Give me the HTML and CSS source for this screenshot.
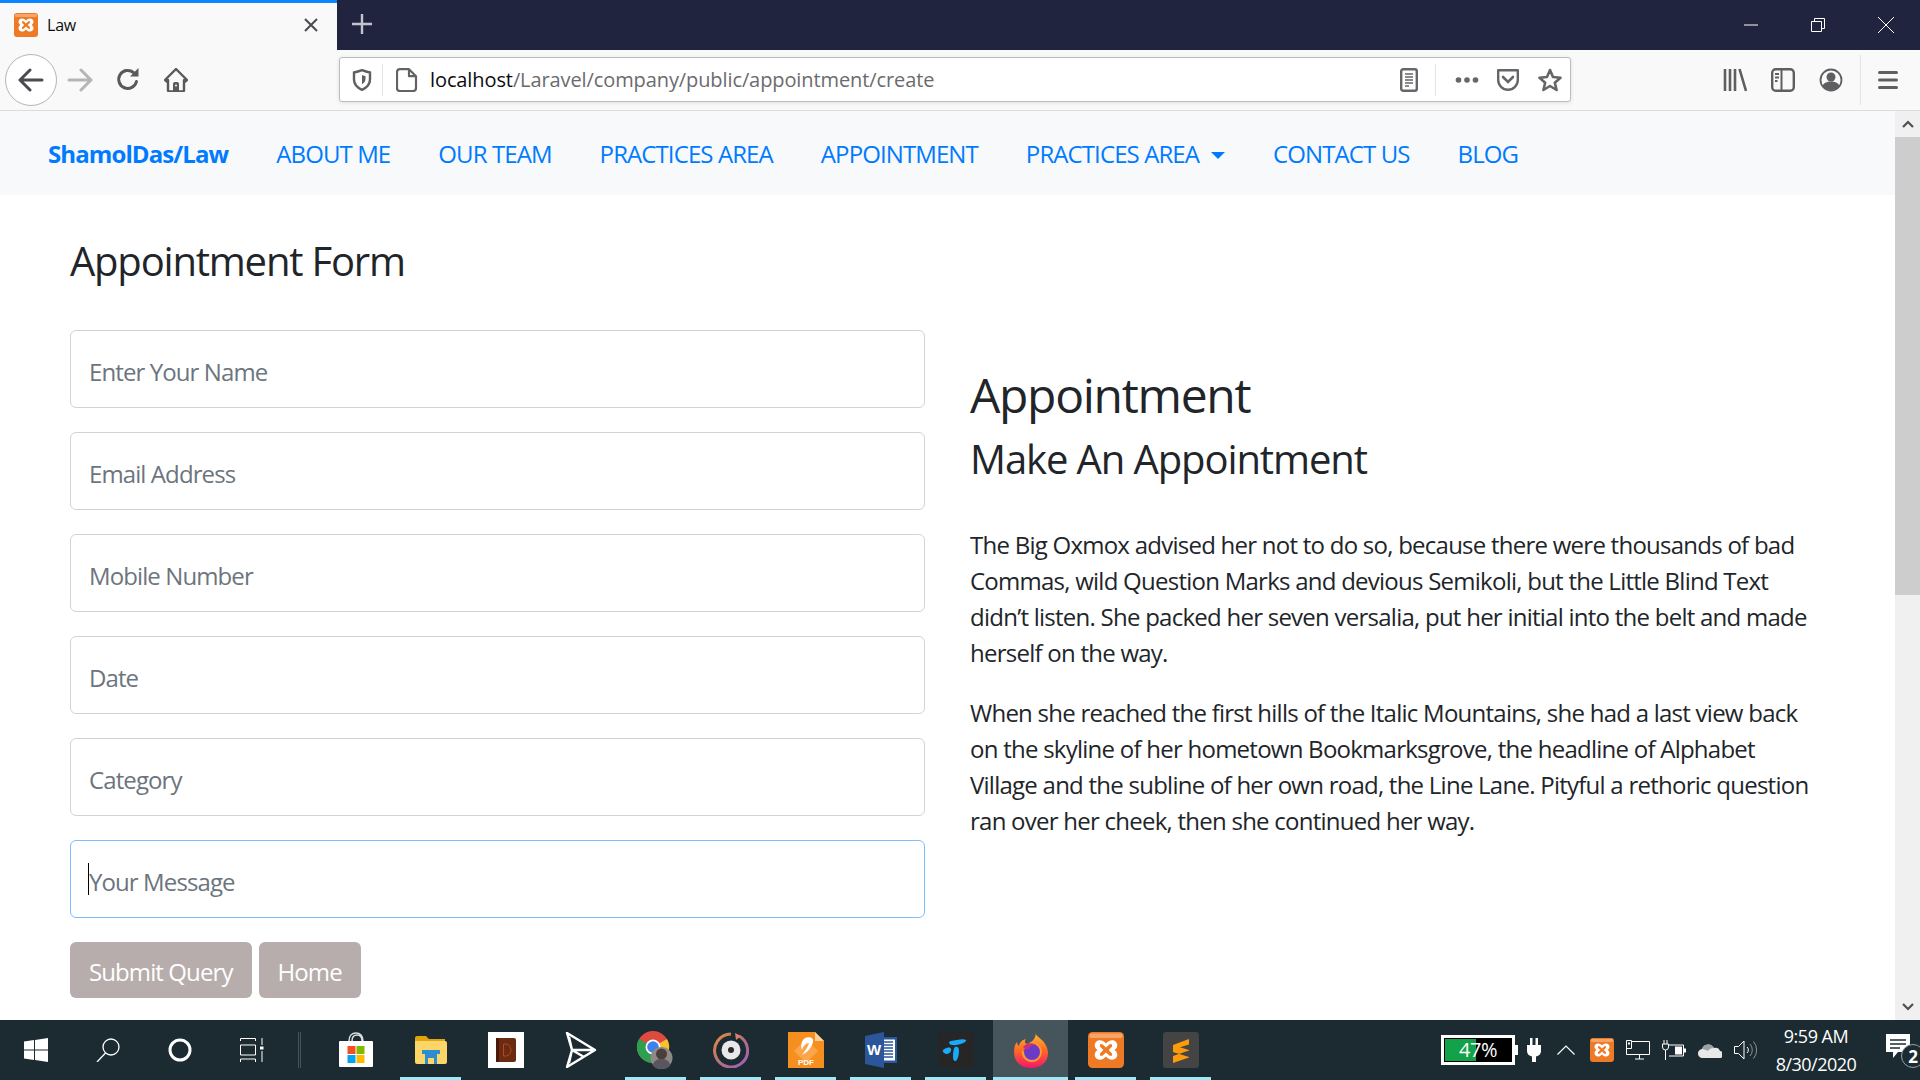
FILE: index.html
```html
<!DOCTYPE html>
<html lang="en">
<head>
<meta charset="utf-8">
<title>Law</title>
<link rel="stylesheet" href="styles.css">
</head>
<body>
<svg class="defs" width="0" height="0">
  <symbol id="xampp" viewBox="0 0 24 24">
    <rect x="0" y="0" width="24" height="24" rx="3" fill="#ef7a25"/>
    <rect x="1" y="1" width="22" height="3" rx="1" fill="#f7a468"/>
    <path d="M8 5.5c-2 0-3.5 1.4-3.5 3.3 0 1.3.7 2.400 1.800 3.200-1.100.8-1.800 1.900-1.800 3.200 0 1.900 1.500 3.300 3.500 3.300 1.600 0 3-.9 4-2.100 1 1.200 2.400 2.100 4 2.100 2 0 3.500-1.400 3.500-3.300 0-1.300-.7-2.400-1.800-3.200 1.100-.8 1.800-1.900 1.800-3.200 0-1.900-1.500-3.300-3.500-3.300-1.600 0-3 .9-4 2.100-1-1.200-2.400-2.100-4-2.100z" fill="#fff"/>
    <path d="M8 8.200h1.600L12 10.400l2.400-2.200H16v1.500l-2.200 2.300 2.200 2.300v1.500h-1.600L12 13.600l-2.400 2.200H8v-1.500l2.200-2.300L8 9.700z" fill="#ef7a25"/>
  </symbol>
</svg>
<div class="window">
  <header class="tabbar">
    <div class="tab">
      <svg class="favicon" width="24" height="24"><use href="#xampp"/></svg>
      <span class="tab-title">Law</span>
      <svg class="tab-close" width="16" height="16" viewBox="0 0 16 16"><path d="M2 2l12 12M14 2L2 14" stroke="#4a4a4f" stroke-width="2"/></svg>
    </div>
    <svg class="newtab" width="22" height="22" viewBox="0 0 22 22"><path d="M11 1v20M1 11h20" stroke="#c3c4ce" stroke-width="2.400"/></svg>
    <div class="winctl">
      <svg width="14" height="14" viewBox="0 0 14 14"><path d="M0 7h14" stroke="#fff"/></svg>
      <svg width="14" height="14" viewBox="0 0 14 14"><path d="M.5 3.500h10v10H.5zM3.500 3.500V.5h10v10h-3" fill="none" stroke="#fff"/></svg>
      <svg width="16" height="16" viewBox="0 0 16 16"><path d="M0 0l16 16M16 0L0 16" stroke="#fff"/></svg>
    </div>
  </header>

  <div class="toolbar">
    <div class="backbtn">
      <svg width="26" height="24" viewBox="0 0 26 24"><path d="M2 12h22M12 2L2 12l10 10" fill="none" stroke="#4a4a4f" stroke-width="3" stroke-linecap="round" stroke-linejoin="round"/></svg>
    </div>
    <div class="tbtn">
      <svg width="26" height="24" viewBox="0 0 26 24"><path d="M2 12h22M14 2l10 10-10 10" fill="none" stroke="#b5b5b6" stroke-width="3" stroke-linecap="round" stroke-linejoin="round"/></svg>
    </div>
    <div class="tbtn">
      <svg width="24" height="24" viewBox="0 0 24 24"><path d="M20.500 13.500A9 9 0 1 1 17.500 4.500" fill="none" stroke="#59595c" stroke-width="3" stroke-linecap="round"/><path d="M14 8.500h8.500V0z" fill="#59595c"/></svg>
    </div>
    <div class="tbtn">
      <svg width="24" height="24" viewBox="0 0 24 24"><path d="M1 12L12 1l11 11-1.500 1.500L20 12v10a1.500 1.500 0 0 1-1.500 1.500h-13A1.500 1.500 0 0 1 4 22V12l-1.500 1.500z" fill="none" stroke="#59595c" stroke-width="2.400" stroke-linejoin="round"/><path d="M9 23v-7a2 2 0 0 1 2-2h2a2 2 0 0 1 2 2v7z" fill="#59595c"/><circle cx="12" cy="17.500" r="1" fill="#f9f9fa"/></svg>
    </div>
    <div class="urlbar">
      <svg class="u-shield" width="20" height="22" viewBox="0 0 20 22"><path d="M2 3.500C5 3 7.500 2.200 10 1.200c2.500 1 5 1.800 8 2.300v7c0 5-4 8.500-8 10.300-4-1.800-8-5.300-8-10.300z" fill="none" stroke="#5f5f62" stroke-width="2.400"/><path d="M10 6c1.300.6 2.400.8 3.500 1v3c0 2.500-1.800 4.300-3.500 5.200z" fill="#5f5f62"/></svg>
      <span class="u-sep"></span>
      <svg class="u-page" width="22" height="24" viewBox="0 0 22 24"><path d="M4 1.200h9l7 7V20a3 3 0 0 1-3 3H4a3 3 0 0 1-3-3V4a3 3 0 0 1 3-2.800zM13 1.200V8.200h7" fill="none" stroke="#636366" stroke-width="2.200" stroke-linejoin="round"/></svg>
      <span class="u-text"><span class="u-host">localhost</span>/Laravel/company/public/appointment/create</span>
      <svg class="u-reader" width="18" height="24" viewBox="0 0 18 24"><rect x="1.200" y="1.200" width="15.600" height="21.600" rx="2" fill="none" stroke="#66666a" stroke-width="2.400"/><path d="M5 6h8M5 9h8M5 12h8M5 15h8M5 18h4" stroke="#66666a" stroke-width="1.500"/></svg>
      <span class="u-sep2"></span>
      <svg class="u-dots" width="24" height="8" viewBox="0 0 24 8"><circle cx="3.500" cy="4" r="2.800" fill="#66666a"/><circle cx="12" cy="4" r="2.800" fill="#66666a"/><circle cx="20.500" cy="4" r="2.800" fill="#66666a"/></svg>
      <svg class="u-pocket" width="24" height="24" viewBox="0 0 24 24"><path d="M2.200 2.200h19.600v9.800a9.800 9.800 0 0 1-19.600 0z" fill="none" stroke="#66666a" stroke-width="2.400" stroke-linejoin="round"/><path d="M7 9l5 5 5-5" fill="none" stroke="#66666a" stroke-width="2.600" stroke-linecap="round"/></svg>
      <svg class="u-star" width="24" height="24" viewBox="0 0 24 24"><path d="M12 2l3 7 7.500.7-5.700 5 1.800 7.300L12 18l-6.600 4 1.800-7.300-5.700-5L9 9z" fill="none" stroke="#66666a" stroke-width="2.600" stroke-linejoin="round"/></svg>
    </div>
    <div class="tools">
      <svg width="24" height="24" viewBox="0 0 24 24"><path d="M2 1v22M7 1v22M12 1v22M16.500 1L23 23" stroke="#5f5f62" stroke-width="2.600"/></svg>
      <svg width="24" height="24" viewBox="0 0 24 24"><rect x="1.200" y="1.200" width="21.600" height="21.600" rx="3.500" fill="none" stroke="#5f5f62" stroke-width="2.400"/><path d="M10.500 2v20" stroke="#5f5f62" stroke-width="2"/><path d="M4 6h4M4 9.500h4M4 13h2.500" stroke="#5f5f62" stroke-width="1.800"/></svg>
      <svg width="24" height="24" viewBox="0 0 24 24"><circle cx="12" cy="12" r="10.500" fill="none" stroke="#5f5f62" stroke-width="1.800"/><circle cx="12" cy="9" r="4.500" fill="#5f5f62"/><path d="M3.500 18c1.500-3.500 5-4.500 8.500-4.500s7 1 8.500 4.500c-2 2.500-5 4-8.500 4s-6.500-1.500-8.500-4z" fill="#5f5f62"/></svg>
      <span class="tools-sep"></span>
      <svg width="20" height="20" viewBox="0 0 20 20"><path d="M1.500 2.500h17M1.500 10h17M1.500 17.500h17" stroke="#5f5f62" stroke-width="3" stroke-linecap="round"/></svg>
    </div>
  </div>

  <div class="viewport">
    <main class="page">
      <nav class="navbar">
        <a class="brand" href="#">ShamolDas/Law</a>
        <a href="#">ABOUT ME</a>
        <a href="#">OUR TEAM</a>
        <a href="#">PRACTICES AREA</a>
        <a href="#">APPOINTMENT</a>
        <a href="#" class="dropdown">PRACTICES AREA<i class="caret"></i></a>
        <a href="#">CONTACT US</a>
        <a href="#">BLOG</a>
      </nav>
      <div class="content">
        <section class="form-col">
          <h2 class="form-title">Appointment Form</h2>
          <form class="form">
            <input class="field" type="text" placeholder="Enter Your Name">
            <input class="field" type="text" placeholder="Email Address">
            <input class="field" type="text" placeholder="Mobile Number">
            <input class="field" type="text" placeholder="Date">
            <input class="field" type="text" placeholder="Category">
            <div class="field-wrap">
              <input class="field focused" type="text" placeholder="Your Message">
              <span class="caret-line"></span>
            </div>
            <div class="actions">
              <button class="btn" type="button">Submit Query</button>
              <button class="btn" type="button">Home</button>
            </div>
          </form>
        </section>
        <section class="text-col">
          <h1 class="h-main">Appointment</h1>
          <h2 class="h-sub">Make An Appointment</h2>
          <p>The Big Oxmox advised her not to do so, because there were thousands of bad Commas, wild Question Marks and devious Semikoli, but the Little Blind Text didn’t listen. She packed her seven versalia, put her initial into the belt and made herself on the way.</p>
          <p>When she reached the first hills of the Italic Mountains, she had a last view back on the skyline of her hometown Bookmarksgrove, the headline of Alphabet Village and the subline of her own road, the Line Lane. Pityful a rethoric question ran over her cheek, then she continued her way.</p>
        </section>
      </div>
    </main>
    <aside class="scrollbar">
      <svg class="sb-arrow" width="12" height="8" viewBox="0 0 12 8"><path d="M1 7l5-5 5 5" fill="none" stroke="#505050" stroke-width="2.200"/></svg>
      <div class="sb-track"><div class="sb-thumb"></div></div>
      <svg class="sb-arrow" width="12" height="8" viewBox="0 0 12 8"><path d="M1 1l5 5 5-5" fill="none" stroke="#505050" stroke-width="2.200"/></svg>
    </aside>
  </div>

  <footer class="taskbar">
    <div class="sys">
      <div class="sys-slot"><svg width="24" height="24" viewBox="0 0 24 24"><path d="M0 3.400l10-1.400v9.500H0zM11 1.900L24 0v11.500H11zM0 12.500h10V22L0 20.600zM11 12.500h13V24l-13-1.900z" fill="#fff"/></svg></div>
      <div class="sys-slot"><svg width="24" height="24" viewBox="0 0 24 24"><circle cx="15" cy="9" r="8" fill="none" stroke="#fff" stroke-width="1.300"/><path d="M9.500 15L1 24" stroke="#fff" stroke-width="1.300"/></svg></div>
      <div class="sys-slot"><svg width="24" height="24" viewBox="0 0 24 24"><circle cx="12" cy="12" r="10" fill="none" stroke="#fff" stroke-width="3"/></svg></div>
      <div class="sys-slot"><svg width="24" height="24" viewBox="0 0 24 24"><path d="M.5 3V.5h15V3M.5 7h15v10H.5zM.5 24v-3h15v3M22 0v7M22 13v11" fill="none" stroke="#fff" stroke-width="1"/><rect x="20" y="8.500" width="3.500" height="3" fill="#fff"/></svg></div>
    </div>
    <span class="tb-sep"></span>
    <div class="apps">
      <div class="app">
        <svg width="36" height="36" viewBox="0 0 36 36"><path d="M11 9c0-5 3-8 7-8s7 3 7 8M14 9c0-4 2-6 5-6s5 2 5 6" fill="none" stroke="#ddd" stroke-width="1.500"/><rect x="1" y="9" width="34" height="26" rx="1" fill="#fff"/><rect x="9.500" y="14" width="8" height="8" fill="#f25022"/><rect x="18.500" y="14" width="8" height="8" fill="#7fba00"/><rect x="9.500" y="23" width="8" height="8" fill="#00a4ef"/><rect x="18.500" y="23" width="8" height="8" fill="#ffb900"/></svg>
      </div>
      <div class="app open">
        <svg width="34" height="30" viewBox="0 0 34 30"><path d="M1 3a2 2 0 0 1 2-2h9l3 3h16v4H1z" fill="#e0a40f"/><path d="M1 6h30a2 2 0 0 1 2 2v19a2 2 0 0 1-2 2H3a2 2 0 0 1-2-2z" fill="#fcd669"/><path d="M11 29V19h-3v-4h18v4h-3v10h-4v-6h-4v6z" fill="#2e8dd0" /><path d="M14 29v-6h6v6z" fill="#fcd669"/></svg>
      </div>
      <div class="app">
        <div class="book-bg"><svg width="20" height="24" viewBox="0 0 20 24"><rect x="0" y="0" width="20" height="24" rx="2" fill="#6b2a12"/><rect x="0" y="0" width="3" height="24" fill="#4a1a08"/><path d="M7.500 6h2.500a5 6 0 0 1 0 12H7.500z" fill="none" stroke="#b24a1a" stroke-width="1"/></svg></div>
      </div>
      <div class="app">
        <svg width="32" height="36" viewBox="0 0 32 36"><path d="M2 1l28 17L2 35l5-17z M7 18h23M7 18l12 7M7 18L4 5M7 18L4 31" fill="none" stroke="#fff" stroke-width="2.400" stroke-linejoin="round"/></svg>
      </div>
      <div class="app open">
        <svg width="40" height="40" viewBox="0 0 40 40">
          <circle cx="17" cy="17" r="16" fill="#dd4b3e"/>
          <path d="M17 17L31 9A16 16 0 0 1 23 32z" fill="#fbc02d"/>
          <path d="M17 17L3 9a16 16 0 0 0 13 24z" fill="#2f9e4f"/>
          <circle cx="17" cy="17" r="7.500" fill="#fff"/><circle cx="17" cy="17" r="5.800" fill="#3f80ea"/>
          <circle cx="25.500" cy="28" r="11" fill="#8d8a88"/><circle cx="25.500" cy="24" r="5.500" fill="#4a3f3a"/><path d="M16.500 35c2-5 5-6 9-6s7 1 9 6c-2 3-5 4-9 4s-7-1-9-4z" fill="#5a5660"/>
        </svg>
      </div>
      <div class="app open">
        <svg width="36" height="36" viewBox="0 0 36 36"><defs><linearGradient id="disc" x1="0" y1="0" x2="1" y2="1"><stop offset="0" stop-color="#e78a3b"/><stop offset=".5" stop-color="#b5707a"/><stop offset="1" stop-color="#9b5fc0"/></linearGradient></defs><path d="M26 4a16.500 16.500 0 1 1-8-2" fill="none" stroke="url(#disc)" stroke-width="3"/><path d="M22 1l6 3-5 4z" fill="#d9826a"/><circle cx="18" cy="18" r="9.500" fill="#e9e9e9"/><circle cx="18" cy="18" r="3" fill="#2a2a2a"/></svg>
      </div>
      <div class="app open">
        <svg width="36" height="36" viewBox="0 0 36 36"><path d="M0 0h27l9 9v27H0z" fill="#f78f1f"/><path d="M27 0v9h9z" fill="#fbd09a"/><path d="M18 7l12 12-12 12L6 19z" fill="#fba64a"/><path d="M17 6c5-2 9 0 8 4-1 5-5 10-11 13 3-4 6-8 7-12-3 0-6 3-7 7-2-5 0-10 3-12z" fill="#fff"/><text x="18" y="33" class="pdf-t">PDF</text></svg>
      </div>
      <div class="app open">
        <svg width="32" height="36" viewBox="0 0 32 36"><rect x="12" y="5" width="20" height="26" fill="#2b579a"/><rect x="17" y="7.500" width="13" height="21" fill="#fff"/><path d="M19 10h9M19 13h9M19 16h9M19 19h9M19 22h9M19 25h9" stroke="#2b579a" stroke-width="1.300"/><path d="M0 4l19-4v36L0 32z" fill="#2b579a"/><text x="9" y="23" class="word-t">W</text></svg>
      </div>
      <div class="app open">
        <svg width="36" height="36" viewBox="0 0 36 36"><rect width="36" height="36" rx="3" fill="#262626"/><path d="M13 9c5-.5 12-3 15-1 1.500 2-8 6-14 5-3-.5-4-3.500-1-4zM5 18c3-2.500 7-3.500 8-1 1 2-2 5-4 5s-5-2-4-4zM17 15c3-1 4 1 4 4s-1 8-3 10c-2 .5-3-1-3-4s.5-9 2-10z" fill="#19aaf8"/></svg>
      </div>
      <div class="app active">
        <svg width="34" height="36" viewBox="0 0 34 36"><defs><linearGradient id="ff" x1="0" y1="0" x2="0" y2="1"><stop offset="0" stop-color="#ffbd30"/><stop offset=".5" stop-color="#ff6b24"/><stop offset="1" stop-color="#f5156c"/></linearGradient></defs><path d="M21 0c1 4 4 5 8 9 4 5 5 9 5 12 0 9-7 15-17 15S0 30 0 20c0-4 1-8 3-10 0 2 1 3 2 4 1-4 3-6 7-7-2 3-1 4 1 5 2-1 5-2 7-5 2-3 2-5 1-7z" fill="url(#ff)"/><path d="M17 10a10 10 0 1 1-9 8c2 3 5 3 7 2-3-3-2-8 2-10z" fill="#ff9a2e"/><circle cx="18" cy="20" r="8" fill="#6b3ac8"/><path d="M9 15c3-4 9-5 13-2-4 0-6 1-7 4-2 1-4 0-6-2z" fill="#c6307c"/></svg>
      </div>
      <div class="app open"><svg width="36" height="36"><use href="#xampp"/></svg></div>
      <div class="app open">
        <svg width="36" height="36" viewBox="0 0 36 36"><rect width="36" height="36" rx="3" fill="#444"/><path d="M26 7L10 13v7l16 5v-7l-9-2.800L26 12.500zM26 18.500v7L10 31v-7z" fill="#fd9b0c"/></svg>
      </div>
    </div>
    <div class="tray">
      <div class="batt"><span class="batt-fill"></span><span class="batt-text">47%</span></div>
      <svg class="t-plug" width="14" height="24" viewBox="0 0 14 24"><path d="M3 0h2.500v7H8.500V0H11v7h3v6c0 3-2 5-5 5.500V24H5v-5.500C2 18 0 16 0 13V7h3z" fill="#fff"/></svg>
      <svg class="t-chev" width="18" height="10" viewBox="0 0 18 10"><path d="M.5 9.500L9 1l8.500 8.500" fill="none" stroke="#fff" stroke-width="1.200"/></svg>
      <svg class="t-xampp" width="24" height="24"><use href="#xampp"/></svg>
      <svg class="t-mon" width="24" height="20" viewBox="0 0 24 20"><path d="M5 1.500h18.500v13H5M5 14.500H.5v-14h5v8h-5M9 19h9M13.500 14.500V19" fill="none" stroke="#fff"/><rect x="2" y="2.500" width="2" height="2" fill="#fff"/></svg>
      <svg class="t-batt" width="24" height="20" viewBox="0 0 24 20"><path d="M7 5h14.500v11H7" fill="none" stroke="#fff"/><rect x="13" y="6.500" width="7" height="8" fill="#fff"/><rect x="22" y="8.500" width="2" height="4" fill="#fff"/><path d="M2 0v4M5 0v4M.5 4h6v3a3 3 0 0 1-6 0zM3.500 10v10" fill="none" stroke="#fff"/></svg>
      <svg class="t-cloud" width="24" height="16" viewBox="0 0 24 16"><path d="M5 16a4.500 4.500 0 0 1-1-9 6.500 6.500 0 0 1 12-1 5 5 0 0 1 6 3 3.500 3.500 0 0 1-1 7z" fill="#e8e8e8"/><path d="M4 7a6.500 6.500 0 0 1 12-1c-3 0-5 1-6 3-2-1.500-4-1.500-6-2z" fill="#9aa2a5"/></svg>
      <svg class="t-vol" width="23" height="20" viewBox="0 0 23 20"><path d="M.5 6.500h4L10 1v18l-5.500-5.500h-4z" fill="none" stroke="#fff"/><path d="M13 7a4 4 0 0 1 0 6" fill="none" stroke="#fff"/><path d="M16 4a9 9 0 0 1 0 12M19.500 1.500a13 13 0 0 1 0 17" fill="none" stroke="#8b9598"/></svg>
      <div class="clock"><span>9:59 AM</span><span>8/30/2020</span></div>
      <div class="notif">
        <svg width="24" height="26" viewBox="0 0 24 26"><path d="M0 0h24v18H12l-5 6v-6H0z" fill="#fff"/><path d="M4 6h16M4 10h16M4 14h10" stroke="#1b2b31" stroke-width="1.300"/></svg>
        <span class="notif-badge">2</span>
      </div>
    </div>
  </footer>
</div>
</body>
</html>
```

FILE: styles.css
```css
* { box-sizing: border-box; }
html, body { margin: 0; height: 100%; overflow: hidden; }
body { font-family: "Open Sans", "Noto Sans", sans-serif; color: #212529; background: #fff; }
.defs { position: absolute; }
.window { width: 1920px; height: 1080px; display: flex; flex-direction: column; }

/* title bar */
.tabbar { height: 50px; flex: none; background: #20243f; display: flex; align-items: center; }
.tab { width: 337px; height: 50px; background: #f9f9fa; border-top: 3px solid #0a84ff; display: flex; align-items: center; padding: 0 18px 3px 14px; font-size: 16px; color: #0c0c0d; margin-top: 0; }
.favicon { flex: none; }
.tab-title { margin-left: 9px; flex: 1; letter-spacing: -.2px; }
.tab-close { flex: none; }
.newtab { margin-left: 14px; margin-top: -2px; }
.winctl { margin-left: auto; display: flex; align-items: center; gap: 53px; padding-right: 26px; }

/* toolbar */
.toolbar { height: 61px; flex: none; background: #f9f9fa; border-bottom: 1px solid #dcdcde; display: flex; align-items: center; padding: 0 0 1px 5px; }
.backbtn { width: 52px; height: 52px; border-radius: 50%; border: 1px solid #b5b5b6; background: #fff; display: flex; align-items: center; justify-content: center; flex: none; }
.tbtn { width: 48px; display: flex; justify-content: center; flex: none; }
.tbtn:nth-child(2) { margin-left: -1px; }
.urlbar { margin-left: 139px; margin-left: 139px; width: 1232px; height: 45px; background: #fff; border: 1px solid #bcbcbe; border-radius: 3px; box-shadow: 0 1px 4px rgba(0,0,0,.1); display: flex; align-items: center; position: relative; flex: none; padding-left: 12px; }
.toolbar .urlbar { margin-left: 0; }
.toolbar .tbtn:nth-child(4) { margin-right: 139px; margin-right: 139px; }
.u-sep { width: 1px; height: 32px; background: #e4e4e6; margin: 0 13px 0 10px; }
.u-page { flex: none; }
.u-text { margin-left: 12px; flex: 1; font-size: 20px; color: #6b6b6e; letter-spacing: -.1px; white-space: nowrap; }
.u-host { color: #0c0c0d; }
.u-reader { flex: none; margin-right: 17px; }
.u-sep2 { width: 1px; height: 32px; background: #e4e4e6; margin-right: 19px; }
.u-dots { flex: none; margin-right: 17px; }
.u-pocket { flex: none; margin-right: 18px; }
.u-star { flex: none; margin-right: 8px; }
.tools { display: flex; align-items: center; margin-left: 152px; gap: 24px; }
.tools-sep { width: 1px; height: 50px; background: #e4e4e6; margin: 0 -7px 0 -7px; }

/* viewport */
.viewport { height: 909px; flex: none; display: flex; overflow: hidden; }
.page { flex: 1; min-width: 0; background: #fff; overflow: hidden; }
.scrollbar { width: 25px; flex: none; background: #f0f0f0; display: flex; flex-direction: column; align-items: center; }
.sb-arrow { margin: 9px 0; flex: none; }
.sb-track { flex: 1; width: 100%; }
.sb-thumb { height: 458px; background: #cdcdcd; }

/* navbar */
.navbar { height: 84px; background: #f8f9fa; display: flex; align-items: center; padding: 0 0 0 48px; font-size: 24px; letter-spacing: -.9px; gap: 48px; }
.navbar a { color: #007bff; text-decoration: none; white-space: nowrap; }
.navbar .brand { font-weight: 700; }
.caret { display: inline-block; margin-left: 12px; vertical-align: 4px; border-top: 7px solid #007bff; border-left: 7px solid transparent; border-right: 7px solid transparent; }

/* content */
.content { display: grid; grid-template-columns: 855px 1fr; column-gap: 45px; padding: 0 70px; }
.form-title { margin: 36px 0 39px; font-size: 40px; font-weight: 400; line-height: 60px; letter-spacing: -1.2px; color: #212529; }
.form { display: flex; flex-direction: column; gap: 24px; }
.field { display: block; width: 100%; height: 78px; border: 1px solid #ced4da; border-radius: 6px; padding: 4px 18px 0; font: 24px/36px "Open Sans", "Noto Sans", sans-serif; letter-spacing: -.9px; color: #495057; background: #fff; outline: 0; }
.field::placeholder { color: #6c757d; opacity: 1; }
.field.focused { border-color: #80bdff; }
.field-wrap { position: relative; }
.caret-line { position: absolute; left: 18px; top: 23px; width: 1px; height: 32px; background: #000; }
.actions { display: flex; gap: 7px; }
.btn { height: 56px; padding: 3px 19px 0; border: 0; border-radius: 6px; background: #b7adad; color: #fff; font: 24px "Open Sans", "Noto Sans", sans-serif; letter-spacing: -.9px; }
.text-col { padding-top: 168px; font-size: 24px; line-height: 36px; letter-spacing: -.75px; }
.h-main { margin: 0; font-size: 48px; font-weight: 400; line-height: 64px; letter-spacing: -1.3px; }
.h-sub { margin: 0 0 36px; font-size: 40px; font-weight: 400; line-height: 64px; letter-spacing: -1.1px; }
.text-col p { margin: 0 0 24px; }

/* taskbar */
.taskbar { height: 60px; flex: none; background: #1b2b31; display: flex; align-items: stretch; color: #fff; }
.sys { display: flex; }
.sys-slot { width: 72px; display: flex; align-items: center; justify-content: center; }
.tb-sep { width: 3px; height: 36px; margin: 12px 0 0 10px; border-left: 1px solid #45545a; border-right: 1px solid #45545a; }
.apps { display: flex; margin-left: 17px; }
.app { width: 75px; display: flex; align-items: center; justify-content: center; position: relative; }
.app.open::after, .app.active::after { content: ""; position: absolute; left: 7px; right: 7px; bottom: 0; height: 3px; background: #9fe9f7; }
.app.active { background: #46555c; }
.app.active::after { left: 0; right: 0; }
.book-bg { width: 36px; height: 36px; background: #fff; display: flex; align-items: center; justify-content: center; }
.pdf-t { font: 700 8px "Liberation Sans", sans-serif; fill: #fff; text-anchor: middle; }
.word-t { font: 700 15px "Liberation Sans", sans-serif; fill: #fff; text-anchor: middle; }
.tray { margin-left: auto; display: flex; align-items: center; }
.batt { width: 74px; height: 30px; border: 3px solid #fff; background: #000; position: relative; display: flex; align-items: center; justify-content: center; margin-right: 12px; }
.batt::after { content: ""; position: absolute; right: -6px; top: 7px; width: 3px; height: 10px; background: #fff; }
.batt-fill { position: absolute; left: 0; top: 0; bottom: 0; width: 33px; background: #13a14a; border: 1px solid #000; }
.batt-text { position: relative; font-size: 20px; line-height: 1; letter-spacing: -.5px; }
.t-plug { margin-right: 16px; }
.t-chev { margin-right: 15px; }
.t-xampp { margin-right: 12px; }
.t-mon { margin-right: 12px; }
.t-batt { margin-right: 12px; }
.t-cloud { margin-right: 12px; }
.t-vol { margin-right: 17px; }
.clock { width: 84px; display: flex; flex-direction: column; align-items: center; font-size: 18px; line-height: 28px; letter-spacing: -.5px; }
.notif { position: relative; width: 48px; margin-left: 16px; margin-right: -2px; height: 36px; padding-left: 12px; padding-top: 2px; }
.notif-badge { position: absolute; left: 27px; top: 12px; width: 24px; height: 24px; border-radius: 50%; background: #1b2b31; border: 1px solid #9aa2a5; display: flex; align-items: center; justify-content: center; font-size: 17px; font-weight: 700; }
```
